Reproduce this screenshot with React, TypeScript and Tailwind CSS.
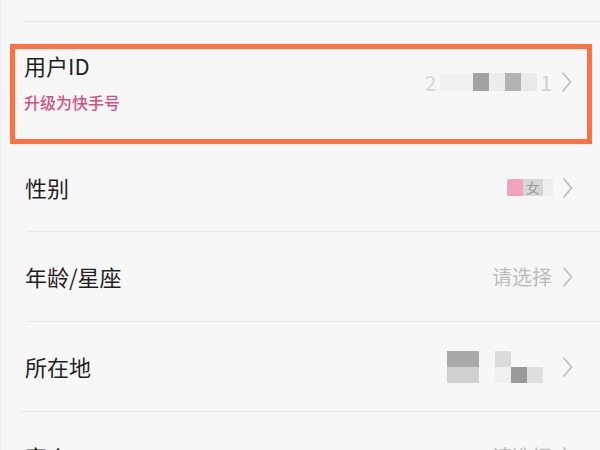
import React from "react";

const font = { fontFamily: '"Noto Sans CJK SC", "Noto Sans", sans-serif' };

// thin grey chevron at the end of each row
function Chevron() {
  return (
    <svg width="11" height="22" viewBox="0 0 11 22" className="shrink-0">
      <polyline points="1.5,1.5 9.5,11 1.5,20.5" fill="none" stroke="#bdbdbd" strokeWidth="1.6" />
    </svg>
  );
}

function Divider({ left }: { left: string }) {
  return <div className={`h-px bg-[#e9e9e9] ${left}`} />;
}

export default function App() {
  return (
    <div className="w-[600px] h-[450px] overflow-hidden bg-[#f7f7f7] border-l border-[#ececec]" style={font}>
      {/* tail of the row above */}
      <div className="h-[21px]" />
      <Divider left="ml-[23px]" />

      {/* user id row, highlighted */}
      <div className="h-[22px]" />
      <div className="ml-[9px] w-[582px] h-[100px] border-[5px] border-[#ff7043] flex items-start justify-between pl-[9px] pr-[15px]">
        <div className="flex flex-col pt-[2px]">
          <span className="text-[22px] leading-[28px] text-[#1f1f1f]">用户ID</span>
          <span className="text-[16px] leading-[22px] font-medium text-[#d6517f] mt-[12px]">升级为快手号</span>
        </div>
        <div className="flex items-center mt-[22px]">
          <span className="text-[21px] text-[#d6d6d6] leading-none">2</span>
          <div className="flex ml-[4px] h-[18px]">
            <div className="w-[33px] bg-[#f1f1f1]" />
            <div className="w-[16px] bg-[#a3a3a3]" />
            <div className="w-[16px] bg-[#ededed]" />
            <div className="w-[16px] bg-[#b2b2b2]" />
            <div className="w-[16px] bg-[#eaeaea]" />
          </div>
          <span className="text-[21px] text-[#cfcfcf] leading-none ml-[3px]">1</span>
          <div className="ml-[9px]"><Chevron /></div>
        </div>
      </div>

      {/* gender */}
      <div className="h-[87px] flex items-center justify-between pl-[24px] pr-[27px]">
        <span className="text-[22px] text-[#1f1f1f]">性别</span>
        <div className="flex items-center">
          <div className="w-[16px] h-[17px] bg-[#f2a3c2] rounded-l-[2px]" />
          <div className="w-[20px] h-[17px] bg-[#d7d7d7] flex items-center justify-center">
            <span className="text-[14px] leading-[17px] text-[#9a9a9a]">女</span>
          </div>
          <div className="w-[10px] h-[17px] bg-[#eeeeee]" />
          <div className="ml-[9px]"><Chevron /></div>
        </div>
      </div>
      <Divider left="ml-[26px]" />

      {/* age / sign */}
      <div className="h-[89px] flex items-center justify-between pl-[24px] pr-[27px]">
        <span className="text-[22px] text-[#1f1f1f]">年龄/星座</span>
        <div className="flex items-center">
          <span className="text-[20px] text-[#bcbcbc]">请选择</span>
          <div className="ml-[10px]"><Chevron /></div>
        </div>
      </div>
      <Divider left="ml-[26px]" />

      {/* location */}
      <div className="h-[89px] flex items-center justify-between pl-[24px] pr-[27px]">
        <span className="text-[22px] text-[#1f1f1f]">所在地</span>
        <div className="flex items-center">
          <div className="flex">
            <div className="flex flex-col">
              <div className="w-[32px] h-[16px] bg-[#a9a9a9]" />
              <div className="w-[32px] h-[16px] bg-[#d0d0d0]" />
            </div>
            <div className="w-[16px]" />
            <div className="flex flex-col">
              <div className="flex">
                <div className="w-[16px] h-[16px] bg-[#dcdcdc]" />
                <div className="w-[32px] h-[16px]" />
              </div>
              <div className="flex">
                <div className="w-[16px] h-[16px] bg-[#f0f0f0]" />
                <div className="w-[16px] h-[16px] bg-[#9a9a9a]" />
                <div className="w-[16px] h-[16px] bg-[#dedede]" />
              </div>
            </div>
          </div>
          <div className="ml-[19px]"><Chevron /></div>
        </div>
      </div>
      <Divider left="ml-[18px]" />

      {/* hometown, cut off by the bottom edge as in the screenshot */}
      <div className="h-[89px] flex items-center justify-between pl-[24px] pr-[27px]">
        <span className="text-[22px] text-[#1f1f1f]">家乡</span>
        <div className="flex items-center">
          <span className="text-[20px] text-[#bcbcbc]">请选择</span>
          <div className="ml-[10px]"><Chevron /></div>
        </div>
      </div>
    </div>
  );
}
